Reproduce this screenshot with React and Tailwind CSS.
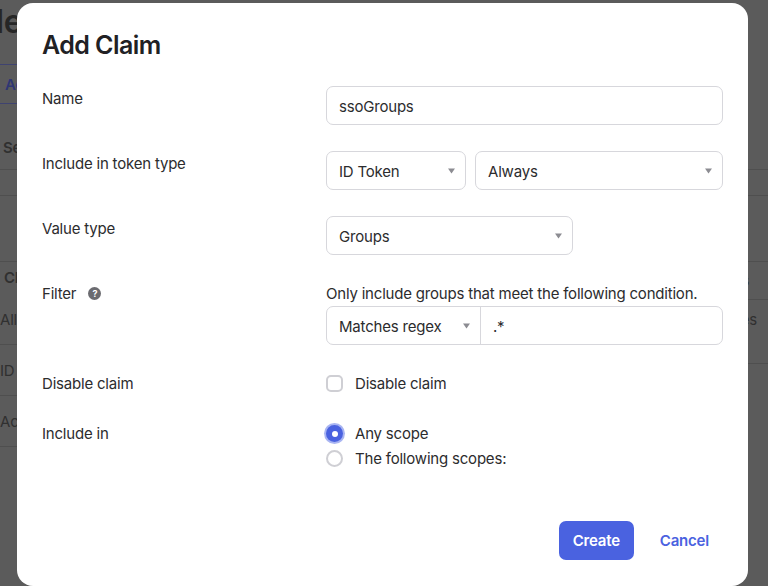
const Chevron = () => (
  <svg width="7" height="6" viewBox="0 0 7 6" className="shrink-0">
    <path d="M0 0.5H7L3.5 5.5Z" fill="#8c8c92" />
  </svg>
);

const Field = ({ label, extra, children, className }) => (
  <div className={`flex ${className}`}>
    <div className="w-[284px] shrink-0 flex items-center gap-[12px] h-[21px] mt-[2px]">
      <span>{label}</span>
      {extra}
    </div>
    <div className="flex-1 min-w-0">{children}</div>
  </div>
);

const Select = ({ value, className }) => (
  <div className={`h-[39px] flex items-center justify-between pt-px pl-[12px] pr-[10px] bg-white border border-[#d7d7dc] rounded-[7px] ${className}`}>
    <span>{value}</span>
    <Chevron />
  </div>
);

const App = () => {
  return (
    <div className="relative w-[768px] h-[586px] overflow-hidden bg-[#5b5b5b] text-[15px] leading-[21px] tracking-[-0.2px] text-[#2c2c2e] font-['Inter',sans-serif]">
      {/* page behind the overlay */}
      <div className="text-[#303030]">
        <div className="h-[64px] pt-[2px] -ml-[16px] text-[32px] leading-[40px] font-semibold text-[#262626]">de</div>
        <div className="w-[60px] h-[40px] border-y border-[#3f4370] flex items-center pl-[5px] font-semibold text-[#2f3674]">Ac</div>
        <div className="h-[66px] pt-[33px] pl-[3px] border-b border-[#4f4f4f] font-semibold">Se</div>
        <div className="h-[26px] border-b border-[#4f4f4f]"></div>
        <div className="h-[66px] border-b border-[#4f4f4f]"></div>
        <div className="flex justify-between">
          <div className="w-[60px]">
            <div className="h-[35px] pt-[5px] pl-1 font-semibold">Cl</div>
            <div className="h-[48px] pt-[12px] border-b border-[#4f4f4f]">All</div>
            <div className="h-[51px] pt-[15px] border-b border-[#4f4f4f]">ID</div>
            <div className="h-[51px] pt-[15px] border-b border-[#4f4f4f]">Ac</div>
          </div>
          <div className="w-[60px] text-right">
            <div className="h-[38px] pt-[8px] pr-[19px] border-b border-[#4f4f4f] font-semibold">s</div>
            <div className="h-[64px] pt-[9px] pr-[11px] border-b border-[#4f4f4f]">es</div>
          </div>
        </div>
      </div>

      <div className="absolute left-[17px] top-[3px] w-[731px] h-[583px] bg-white rounded-[16px] pt-[25px] px-[25px]">
        <h2 className="text-[25px] leading-[34px] tracking-[-0.55px] font-semibold text-[#212124]">Add Claim</h2>

        <Field label="Name" className="mt-[24px]">
          <div className="h-[39px] flex items-center pt-px px-[12px] border border-[#d7d7dc] rounded-[7px]">ssoGroups</div>
        </Field>

        <Field label="Include in token type" className="mt-[26px]">
          <div className="flex gap-[9px]">
            <Select value="ID Token" className="w-[140px]" />
            <Select value="Always" className="flex-1" />
          </div>
        </Field>

        <Field label="Value type" className="mt-[26px]">
          <Select value="Groups" className="w-[247px]" />
        </Field>

        <Field
          label="Filter"
          className="mt-[26px]"
          extra={
            <span className="w-[13px] h-[13px] rounded-full bg-[#6b6b70] text-white text-[9px] leading-[13px] font-bold text-center">?</span>
          }
        >
          <div className="mt-[2px]">Only include groups that meet the following condition.</div>
          <div className="mt-[2px] w-[397px] h-[39px] flex border border-[#d7d7dc] rounded-[7px]">
            <div className="w-[154px] flex items-center justify-between pt-px pl-[12px] pr-[10px] border-r border-[#d7d7dc]">
              <span>Matches regex</span>
              <Chevron />
            </div>
            <div className="flex items-center pt-px pl-[12px]">.*</div>
          </div>
        </Field>

        <Field label="Disable claim" className="mt-[26px]">
          <label className="flex items-center gap-[12px] h-[21px] mt-[2px]">
            <span className="w-[17px] h-[17px] border-2 border-[#cfcfd4] rounded-[5px]"></span>
            Disable claim
          </label>
        </Field>

        <Field label="Include in" className="mt-[27px]">
          <label className="flex items-center gap-[12px] h-[21px] mt-[2px]">
            <span className="w-[17px] h-[17px] rounded-full bg-[#4a62e0] shadow-[0_0_0_2px_#a9b5f2] flex items-center justify-center">
              <span className="w-[6px] h-[6px] rounded-full bg-white"></span>
            </span>
            Any scope
          </label>
          <label className="flex items-center gap-[12px] h-[21px] mt-[4px]">
            <span className="w-[17px] h-[17px] rounded-full border-2 border-[#cfcfd4]"></span>
            The following scopes:
          </label>
        </Field>

        <div className="mt-[52px] flex justify-end items-center gap-[26px] pr-[14px]">
          <button className="w-[75px] h-[39px] rounded-[7px] bg-[#4a62e0] text-white font-semibold">Create</button>
          <button className="text-[#4a62e0] font-semibold">Cancel</button>
        </div>
      </div>
    </div>
  );
};

export default App;
